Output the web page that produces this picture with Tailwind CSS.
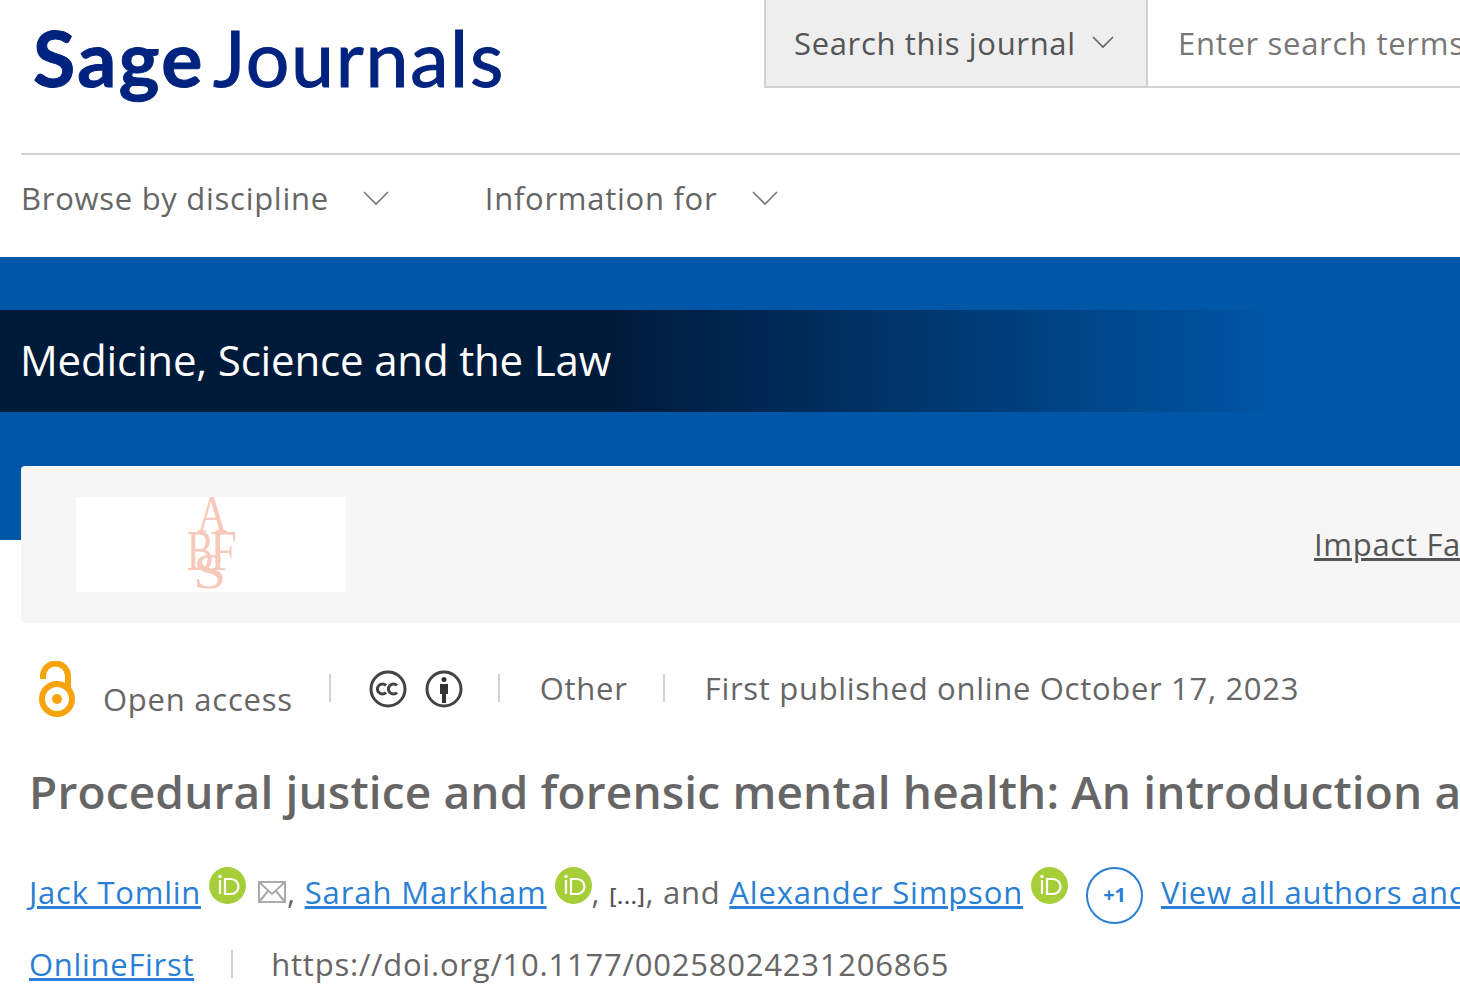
<!DOCTYPE html>
<html lang="en">
<head>
<meta charset="utf-8">
<title>Sage Journals</title>
<script src="https://cdn.jsdelivr.net/npm/@tailwindcss/browser@4"></script>
</head>
<body class="bg-white">
<div class="w-[1460px] h-[1000px] overflow-hidden font-['Open_Sans',sans-serif] text-[#555]">
  <header class="h-[257px] pl-[21px]">
    <div class="h-[155px] border-b-2 border-[#d2d2d2] flex items-start justify-between">
      <div class="ml-[12px] mt-[13px] font-['Lato',sans-serif] text-[#00237f] text-[77px] leading-[88px] whitespace-nowrap"><span class="font-bold tracking-[2.5px] [-webkit-text-stroke:1px_#00237f]">Sage</span><span class="ml-[8px] tracking-[1.7px] [-webkit-text-stroke:1px_#00237f]">Journals</span></div>
      <div class="flex h-[88px] w-[696px] shrink-0 border-b-2 border-[#d2d2d2]">
        <div class="w-[384px] shrink-0 bg-[#eee] border-x-2 border-[#d2d2d2] flex items-center pl-[28px] text-[31px] tracking-[0.66px] text-[#555] whitespace-nowrap">Search this journal
          <svg class="ml-[15px] mt-[-2px]" width="24" height="14" viewBox="0 0 24 14" fill="none" stroke="#666" stroke-width="1.6"><path d="M2 2l10 10L22 2"/></svg>
        </div>
        <div class="pl-[30px] flex items-center text-[31px] tracking-[0.7px] text-[#777] whitespace-nowrap">Enter search terms</div>
      </div>
    </div>
    <nav class="flex items-center h-[86px] text-[31px] tracking-[0.72px] text-[#666]">
      <span>Browse by discipline</span>
      <svg class="ml-[33px] mr-[95px]" width="28" height="16" viewBox="0 0 28 16" fill="none" stroke="#777" stroke-width="1.6"><path d="M2 2l12 12L26 2"/></svg>
      <span>Information for</span>
      <svg class="ml-[34px]" width="28" height="16" viewBox="0 0 28 16" fill="none" stroke="#777" stroke-width="1.6"><path d="M2 2l12 12L26 2"/></svg>
    </nav>
  </header>

  <section class="h-[283px] bg-[#0057a8] pt-[53px]">
    <div class="h-[102px] pl-[20px] pb-[4px] flex items-center text-white text-[42px] tracking-[-0.17px] bg-[linear-gradient(90deg,#001a3a_0%,#001a3a_42%,#0057a8_88%)]">Medicine, Science and the Law</div>
    <div class="mt-[54px] ml-[21px] h-[157px] bg-[#f6f6f6] rounded-tl-[4px] rounded-bl-[4px] flex items-center pl-[55px] overflow-hidden">
      <div class="relative w-[270px] h-[95px] bg-white shrink-0 font-['Liberation_Serif',serif] text-[#f7c9bb] leading-none">
        <span class="absolute left-[121px] top-[-9px] text-[53px] origin-left scale-x-[0.8]">A</span>
        <span class="absolute left-[111px] top-[25px] text-[57px] origin-left scale-x-[0.7]">B</span>
        <span class="absolute left-[134px] top-[25px] text-[57px] origin-left scale-x-[0.85]">F</span>
        <span class="absolute left-[117px] top-[49px] text-[50px] origin-left scale-x-[1.2]">S</span>
      </div>
      <span class="ml-[968px] text-[31px] tracking-[0.7px] text-[#555] underline whitespace-nowrap">Impact Factor</span>
    </div>
  </section>

  <div class="pl-[29px] mt-[117px]">
    <div class="flex items-center h-[62px] -ml-[29px] pl-[38px] text-[#666] text-[31px] tracking-[0.75px] whitespace-nowrap">
      <svg width="38" height="58" viewBox="0 0 38 58" fill="none" stroke="#f7a30c" stroke-width="6" class="shrink-0 mt-[4px]">
        <path d="M5 18V15a12 12 0 0 1 25 0v14"/>
        <circle cx="19" cy="38" r="15"/>
        <circle cx="19" cy="38" r="5" fill="#f7a30c" stroke="none"/>
      </svg>
      <span class="ml-[27px] mt-[22px]">Open access</span>
      <span class="ml-[36px] w-[2px] h-[28px] bg-[#d2d2d2]"></span>
      <svg class="ml-[38px] mt-[2px]" width="38" height="38" viewBox="0 0 38 38" fill="none" stroke="#444" stroke-width="3">
        <circle cx="19" cy="19" r="17"/>
        <path d="M17 15.5a5 5 0 1 0 0 7M28 15.500a5 5 0 1 0 0 7"/>
      </svg>
      <svg class="ml-[18px] mt-[2px]" width="38" height="38" viewBox="0 0 38 38" fill="none" stroke="#444" stroke-width="3">
        <circle cx="19" cy="19" r="17"/>
        <circle cx="19" cy="9.500" r="2.500" fill="#333" stroke="none"/>
        <path d="M15 14h8v10h-2v9h-4v-9h-2z" fill="#333" stroke="none"/>
      </svg>
      <span class="ml-[35px] w-[2px] h-[28px] bg-[#d2d2d2]"></span>
      <span class="ml-[40px]">Other</span>
      <span class="ml-[35px] w-[2px] h-[28px] bg-[#d2d2d2]"></span>
      <span class="ml-[40px] tracking-[0.7px]">First published online October 17, 2023</span>
    </div>

    <h1 class="mt-[41px] h-[62px] font-semibold text-[46px] leading-[62px] tracking-[0.16px] text-[#666] whitespace-nowrap">Procedural justice and forensic mental health: An introduction and overview</h1>

    <div class="mt-[38px] flex items-center h-[64px] text-[31px] tracking-[0.75px] whitespace-nowrap text-[#666]">
      <a class="text-[#2a7fd4] underline">Jack Tomlin</a>
      <svg class="ml-[8px] mt-[-14px] shrink-0" width="37" height="37" viewBox="0 0 37 37"><circle cx="18.500" cy="18.500" r="18.500" fill="#a6ce39"/><circle cx="11" cy="9.500" r="1.700" fill="#fff"/><path d="M11 13v14M16 12v15h6a7.500 7.500 0 0 0 0-15z" fill="none" stroke="#fff" stroke-width="2.200"/></svg>
      <svg class="ml-[11px] shrink-0" width="30" height="26" viewBox="0 0 30 26" fill="none" stroke="#aaa" stroke-width="2"><path d="M2 3h26v20H2zM2 3l13 12L28 3M2 23l9-11M28 23l-9-11"/></svg>
      <span>,&nbsp;</span>
      <a class="text-[#2a7fd4] underline tracking-[0.9px]">Sarah Markham</a>
      <svg class="ml-[8px] mt-[-14px] shrink-0" width="37" height="37" viewBox="0 0 37 37"><circle cx="18.500" cy="18.500" r="18.500" fill="#a6ce39"/><circle cx="11" cy="9.500" r="1.700" fill="#fff"/><path d="M11 13v14M16 12v15h6a7.500 7.500 0 0 0 0-15z" fill="none" stroke="#fff" stroke-width="2.200"/></svg>
      <span>,&nbsp;</span>
      <span class="text-[22px] font-semibold text-[#555] mt-[6px]">[...]</span>
      <span>, and&nbsp;</span>
      <a class="text-[#2a7fd4] underline tracking-[0.85px]">Alexander Simpson</a>
      <svg class="ml-[8px] mt-[-14px] shrink-0" width="37" height="37" viewBox="0 0 37 37"><circle cx="18.500" cy="18.500" r="18.500" fill="#a6ce39"/><circle cx="11" cy="9.500" r="1.700" fill="#fff"/><path d="M11 13v14M16 12v15h6a7.500 7.500 0 0 0 0-15z" fill="none" stroke="#fff" stroke-width="2.200"/></svg>
      <span class="ml-[18px] w-[57px] h-[57px] rounded-full border-2 border-[#2a7fd4] text-[#2a7fd4] text-[20px] font-bold tracking-normal flex items-center justify-center shrink-0 mt-[6px]">+1</span>
      <a class="ml-[18px] text-[#2a7fd4] underline">View all authors and affiliations</a>
    </div>

    <div class="mt-[15px] flex items-center h-[50px] text-[31px] tracking-[0.7px] text-[#666] whitespace-nowrap">
      <a class="text-[#2a7fd4] underline">OnlineFirst</a>
      <span class="ml-[37px] w-[2px] h-[28px] bg-[#d2d2d2]"></span>
      <span class="ml-[38px] tracking-[0.78px]">https://doi.org/10.1177/00258024231206865</span>
    </div>
  </div>
</div>
</body>
</html>
